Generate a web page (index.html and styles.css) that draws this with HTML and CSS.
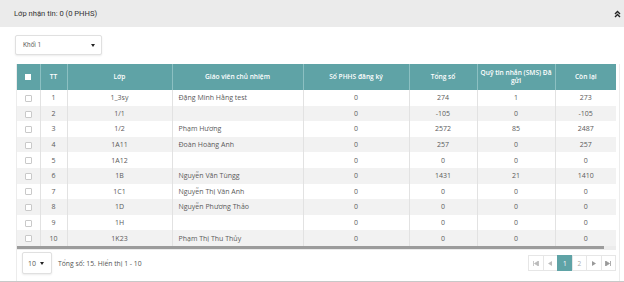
FILE: index.html
```html
<!DOCTYPE html>
<html lang="vi">
<head>
    <meta charset="UTF-8">
    <meta name="viewport" content="width=device-width, initial-scale=1.0">
    <title>Lớp nhận tin</title>
    <link rel="stylesheet" href="styles.css">
</head>
<body>
    <div class="panel">
        <div class="panel-heading">
            <span class="panel-title">Lớp nhận tin: 0 (0 PHHS)</span>
            <svg class="collapse-icon" width="7" height="8" viewBox="0 0 7 8">
                <path d="M1 4 L3.5 1.5 L6 4 M1 7 L3.5 4.5 L6 7" fill="none" stroke="#222" stroke-width="1.4"/>
            </svg>
        </div>

        <div class="panel-body">
            <div class="select grade-select">
                <span>Khối 1</span>
                <span class="caret"></span>
            </div>

            <div class="grid-wrap">
                <table class="grid">
                    <colgroup>
                        <col style="width: 23px">
                        <col style="width: 27px">
                        <col style="width: 105px">
                        <col style="width: 131px">
                        <col style="width: 106px">
                        <col style="width: 68px">
                        <col style="width: 78px">
                        <col style="width: 61px">
                    </colgroup>
                    <thead>
                        <tr>
                            <th><span class="check check-head"></span></th>
                            <th>TT</th>
                            <th>Lớp</th>
                            <th>Giáo viên chủ nhiệm</th>
                            <th>Số PHHS đăng ký</th>
                            <th>Tổng số</th>
                            <th>Quỹ tin nhắn (SMS) Đã gửi</th>
                            <th>Còn lại</th>
                        </tr>
                    </thead>
                    <tbody id="rows"></tbody>
                </table>
                <div class="hscroll"><div class="hscroll-thumb"></div></div>

                <div class="grid-footer">
                    <div class="select page-size">
                        <span>10</span>
                        <span class="caret"></span>
                    </div>
                    <span class="total">Tổng số: 15. Hiển thị 1 - 10</span>
                    <div class="pager">
                        <a class="pg"><svg width="6" height="5" viewBox="0 0 6 5"><path d="M0.5 0 V5 M5.5 0 L1.5 2.5 L5.5 5 Z" fill="#bbb" stroke="#bbb" stroke-width="0.8"/></svg></a>
                        <a class="pg"><svg width="4" height="5" viewBox="0 0 4 5"><path d="M4 0 L0 2.5 L4 5 Z" fill="#bbb"/></svg></a>
                        <a class="pg active">1</a>
                        <a class="pg">2</a>
                        <a class="pg"><svg width="4" height="5" viewBox="0 0 4 5"><path d="M0 0 L4 2.5 L0 5 Z" fill="#999"/></svg></a>
                        <a class="pg"><svg width="6" height="5" viewBox="0 0 6 5"><path d="M5.5 0 V5 M0.5 0 L4.5 2.5 L0.5 5 Z" fill="#999" stroke="#999" stroke-width="0.8"/></svg></a>
                    </div>
                </div>
            </div>
        </div>
    </div>

    <script>
        // dữ liệu lớp
        const data = [
            [1, '1_3sy', 'Đặng Minh Hằng test', 0, 274, 1, 273],
            [2, '1/1', '', 0, -105, 0, -105],
            [3, '1/2', 'Phạm Hương', 0, 2572, 85, 2487],
            [4, '1A11', 'Đoàn Hoàng Anh', 0, 257, 0, 257],
            [5, '1A12', '', 0, 0, 0, 0],
            [6, '1B', 'Nguyễn Văn Tùngg', 0, 1431, 21, 1410],
            [7, '1C1', 'Nguyễn Thị Vân Anh', 0, 0, 0, 0],
            [8, '1D', 'Nguyễn Phương Thảo', 0, 0, 0, 0],
            [9, '1H', '', 0, 0, 0, 0],
            [10, '1K23', 'Phạm Thị Thu Thủy', 0, 0, 0, 0]
        ];

        const tbody = document.getElementById('rows');
        tbody.innerHTML = data.map(r => `
            <tr>
                <td><span class="check"></span></td>
                <td>${r[0]}</td>
                <td>${r[1]}</td>
                <td class="left">${r[2]}</td>
                <td>${r[3]}</td>
                <td>${r[4]}</td>
                <td>${r[5]}</td>
                <td>${r[6]}</td>
            </tr>`).join('');
    </script>
</body>
</html>
```

FILE: styles.css
```css
body {
    margin: 0;
    font-family: "Open Sans", Arial, sans-serif;
    background: #fff;
    color: #5a5a5a;
}
.panel {
    height: 281px;
    border-bottom: 1px solid #c8c8c8;
}
.panel-heading {
    height: 27px;
    background: #ebebeb;
    display: flex;
    align-items: center;
    justify-content: space-between;
    padding: 0 3px 0 14px;
}
.panel-title {
    font-family: Roboto, Arial, sans-serif;
    font-size: 7.6px;
    color: #333;
}
.collapse-icon {
    display: block;
}
.panel-body {
    padding: 8px 4px 0 15px;
}
.select {
    display: flex;
    align-items: center;
    justify-content: space-between;
    box-sizing: border-box;
    border: 1px solid #e0e0e0;
    border-radius: 2px;
    box-shadow: 0 1px 2px rgba(0,0,0,0.08);
    background: #fff;
    font-family: Roboto, Arial, sans-serif;
    color: #666;
}
.grade-select {
    width: 87px;
    height: 20px;
    padding: 0 6px 0 7px;
    font-size: 6.5px;
}
.caret {
    width: 0;
    height: 0;
    border-left: 2.5px solid transparent;
    border-right: 2.5px solid transparent;
    border-top: 3px solid #222;
}
.grid-wrap {
    margin: 9px 0 0 1px;
    border: 1px solid #ececec;
    border-top: none;
    border-bottom: none;
    height: 217px;
}
.grid {
    border-collapse: collapse;
    table-layout: fixed;
    width: 599px;
    font-size: 7px;
}
.grid th {
    background: #5fa3a6;
    color: #fff;
    font-weight: 600;
    font-size: 6.6px;
    height: 26px;
    padding: 0 2px;
    border-left: 1px solid #8cc0c2;
    line-height: 8px;
    text-align: center;
}
.grid th:first-child {
    border-left: none;
}
.grid td {
    height: 15.6px;
    padding: 0;
    text-align: center;
    border-left: 1px solid #e2e2e2;
    white-space: nowrap;
}
.grid td:first-child {
    border-left: none;
}
.grid td.left {
    text-align: left;
    padding-left: 6px;
}
.grid tbody tr:nth-child(even) td {
    background: #f2f2f2;
}
.check {
    display: inline-block;
    width: 5px;
    height: 5px;
    border: 1px solid #c9c9c9;
    border-radius: 1px;
    background: #fff;
    vertical-align: middle;
}
.check-head {
    width: 6px;
    height: 6px;
    border: none;
    border-radius: 0;
}
.hscroll {
    width: 599px;
    height: 4px;
    background: #ececec;
}
.hscroll-thumb {
    width: 587px;
    height: 3px;
    background: #9c9c9c;
}
.grid-footer {
    display: flex;
    align-items: center;
    height: 27px;
    padding: 0 0 0 5px;
}
.page-size {
    width: 30px;
    height: 22px;
    padding: 0 7px 0 5px;
    font-family: "Open Sans", Arial, sans-serif;
    font-size: 7px;
    color: #555;
}
.total {
    margin-left: 6px;
    font-size: 6.8px;
    color: #555;
}
.pager {
    display: flex;
    margin-left: auto;
    margin-right: 3px;
}
.pg {
    display: flex;
    align-items: center;
    justify-content: center;
    width: 15.5px;
    height: 16px;
    box-sizing: border-box;
    border: 1px solid #e6e6e6;
    margin-left: -1px;
    font-size: 6.5px;
    color: #aaa;
}
.pg.active {
    background: #5fa3a6;
    border-color: #5fa3a6;
    color: #fff;
}
```
